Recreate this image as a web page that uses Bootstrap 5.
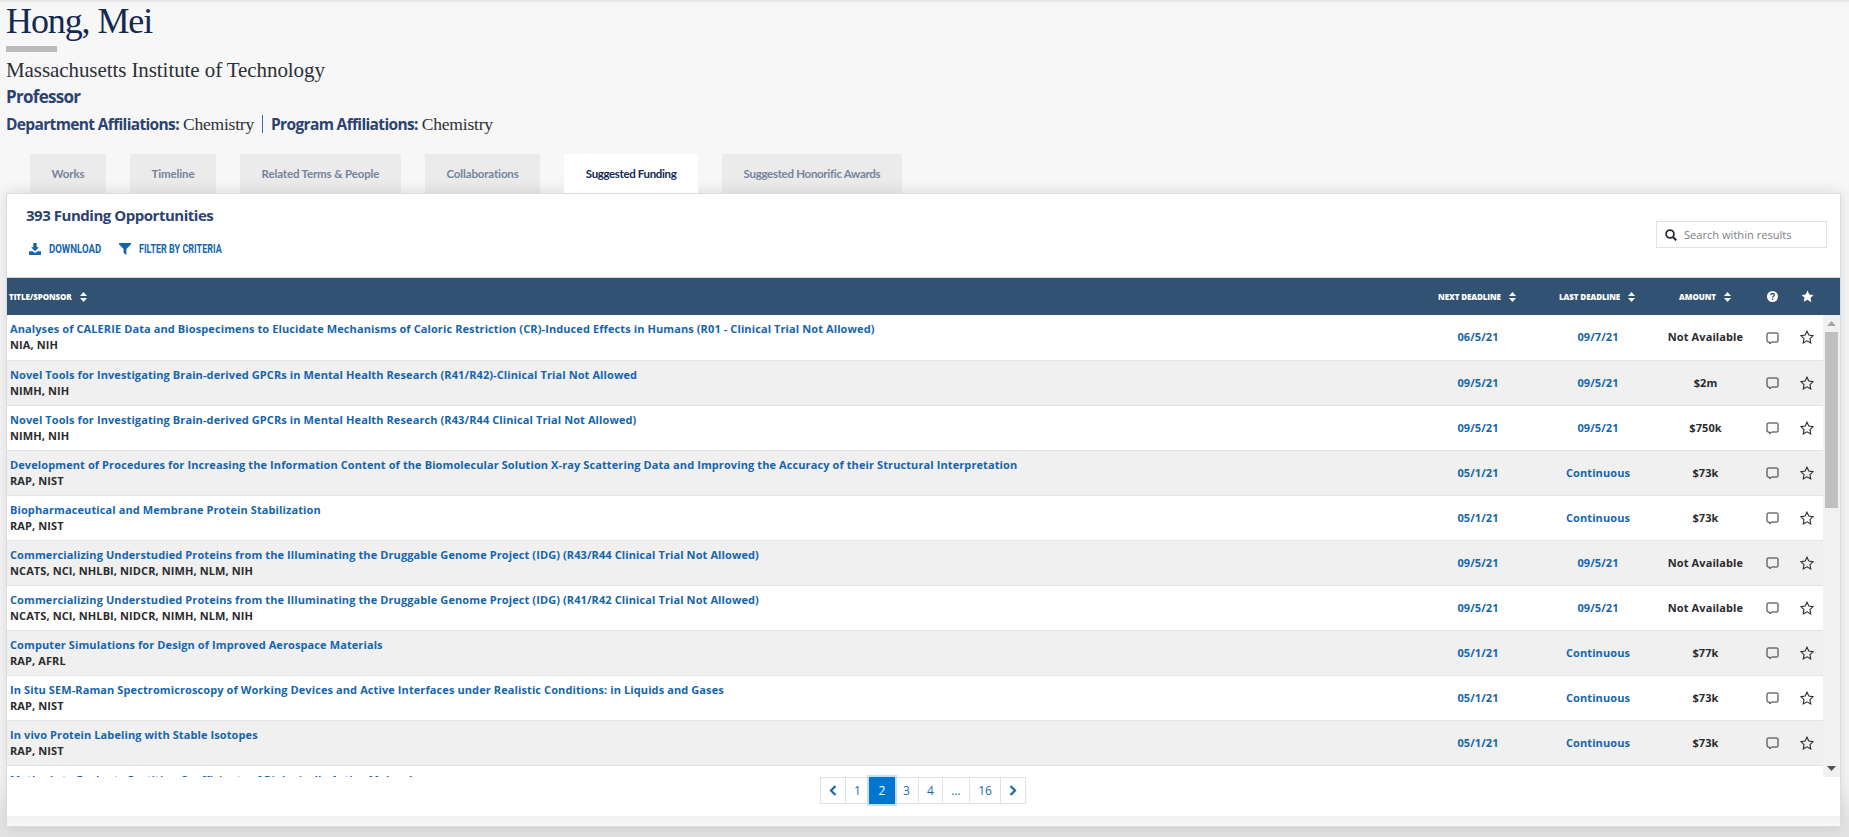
<!DOCTYPE html>
<html lang="en"><head><meta charset="utf-8"><title>Hong, Mei</title>
<link href="https://cdn.jsdelivr.net/npm/bootstrap@5.3.0/dist/css/bootstrap.min.css" rel="stylesheet">
<style>
html,body{height:837px;overflow:hidden}
body{background:#f7f7f7;font-family:"Open Sans",sans-serif}
.page-wrap{padding:0 8px 0 6px;height:837px;background:linear-gradient(#f7f7f7 780px,#e3e3e3 830px);box-shadow:inset 0 3px 3px -2px rgba(0,0,0,.12)}
.hname{font:400 36px/42px "Liberation Serif",serif;letter-spacing:-1.1px;color:#14294f;margin:0}
.hbar{width:51px;height:6px;background:#bbb;margin:4px 0 5px}
.hinst{font:400 21px/26px "Liberation Serif",serif;letter-spacing:-.08px;color:#2b2f36;margin:0}
.hrole{font:700 17px/22px "Open Sans",sans-serif;letter-spacing:-.7px;color:#2c4270;margin:3px 0 0}
.haff{font:700 15.5px/22px "Open Sans",sans-serif;letter-spacing:-.65px;color:#2c4270;margin:5px 0 0;display:flex;align-items:center}
.haff span{font:400 17.5px/22px "Liberation Serif",serif;letter-spacing:-.2px;color:#2b2f36;margin-left:4px}
.haff i{display:block;width:1px;height:18px;background:#2c6fb0;margin:0 8px}
.tabrow{display:flex;gap:24px;padding-left:24px;margin-top:19px;height:39px;position:relative}
.tabx{font:700 11.5px/39px "Lato",sans-serif;color:#75849b;background:#ebebeb;padding:0 21.600px;letter-spacing:-.14px;white-space:nowrap}
.tabx.on{background:#fff;color:#14294f;position:relative;z-index:3;letter-spacing:-.36px}
.tabx.tight{letter-spacing:-.3px}
.panel{position:relative;z-index:2;background:#fff;border:1px solid #dcdcdc;box-shadow:0 0 14px rgba(0,0,0,.13);height:634px;display:flex;flex-direction:column}
.ptop{height:83px;padding:10px 13px 0 19px;display:flex;justify-content:space-between}
.ptitle{font:700 15px/22px "Open Sans",sans-serif;letter-spacing:-.47px;color:#2c4270;margin:0}
.acts{display:flex;margin-top:15px;padding-left:3px}
.acts a{display:flex;align-items:center;gap:8px;text-decoration:none;color:#1565ad;margin-right:18px}
.acts span{display:inline-block;font:700 12px/16px "Roboto",sans-serif;transform:scaleX(.8);transform-origin:left center;white-space:nowrap}
.acts .w1{margin-right:-13px}
.acts span.w2{transform:scaleX(.75);margin-right:-27px}
.sbox{width:171px;height:27px;margin-top:17px;border:1px solid #dfe3e9;display:flex;align-items:center;gap:7px;padding:0 8px}
.sbox input{border:0;outline:0;padding:0;width:130px;font:400 11.100px/16px "Open Sans",sans-serif;color:#333;background:transparent}
.sbox input::placeholder{color:#7b7f85;opacity:1}
.tbl{table-layout:fixed;width:100%;margin:0;border-collapse:collapse}
.tbl>*>*>*{padding:0;background:transparent;box-shadow:none}
.thead-wrap{background:#315272;height:38px;border-top:1px solid #cfd4da}
.thead-wrap th{height:37px;color:#fff;font:800 8px/12px "Open Sans",sans-serif;letter-spacing:-.1px;border:0;vertical-align:middle;text-align:center;white-space:nowrap;text-transform:uppercase}
.thead-wrap th:first-child{text-align:left;padding-left:2px}
.thead-wrap svg{vertical-align:-2px}
.sortic{margin-left:8px}
.tscroll{display:flex;height:462px;overflow:hidden}
.tbody-wrap{flex:1 1 auto;min-width:0;overflow:hidden}
.tbody-wrap tr{height:45px}
.tbody-wrap td{border:0;border-bottom:1px solid #e1e4ea;vertical-align:middle;text-align:center;font:700 11px/16px "Open Sans",sans-serif;letter-spacing:.1px;color:#2a2b2d;height:45px;white-space:nowrap}
.tbody-wrap td:first-child{text-align:left;padding:0 0 0 3px;overflow:hidden}
.tbody-wrap td:first-child.endcell{vertical-align:top;padding-top:6px}
.tbody-wrap td svg{display:block;margin:0 auto}
.tbody-wrap tr:nth-child(even) td{background:#f0f0f0}
.tbody-wrap a{color:#1565ad;text-decoration:none;display:block}
.tbody-wrap a.cen{display:inline}
.sponsor{display:block}
.sbar{flex:0 0 17px;width:17px;background:#f1f1f1;display:flex;flex-direction:column;align-items:center}
.sarrow{height:17px;flex:none;display:flex;align-items:center;justify-content:center}
.sthumb{width:13px;height:176px;background:#c0c0c0;flex:none}
.sgrow{flex:1}
.pfoot{flex:1;display:flex;justify-content:center;align-items:flex-start}
.pgr{display:flex;margin:0;padding:0;list-style:none;font:400 12px/25px "Open Sans",sans-serif}
.pgr li{border:1px solid #dde2e8;margin-left:-1px;height:27px;text-align:center;color:#1a69b0;background:#fff;position:relative}
.pgr li.cur{background:#0275d0;color:#fff;border-color:#0275d0;box-shadow:0 0 0 2px #c5dff4;z-index:1}
.pgr svg{vertical-align:-1px}
.pend{height:10px;flex:none;background:linear-gradient(#f0f0f0,#f8f8f8)}
</style></head><body>
<div class="page-wrap">
<h1 class="hname">Hong, Mei</h1>
<div class="hbar"></div>
<p class="hinst">Massachusetts Institute of Technology</p>
<p class="hrole">Professor</p>
<p class="haff">Department Affiliations:<span>Chemistry</span><i></i>Program Affiliations:<span>Chemistry</span></p>
<div class="tabrow">
<div class="tabx">Works</div><div class="tabx">Timeline</div><div class="tabx">Related Terms &amp; People</div><div class="tabx">Collaborations</div><div class="tabx on">Suggested Funding</div><div class="tabx tight">Suggested Honorific Awards</div>
</div>
<div class="panel">
<div class="ptop">
<div>
<h2 class="ptitle">393 Funding Opportunities</h2>
<div class="acts">
<a href="#"><svg width="12" height="12" viewBox="0 0 12 12" fill="#1565ad"><path d="M4.300 0h3.400v4.300h2.200L6 8.200 2.100 4.300h2.200z"/><path d="M0 8.200h3.600L6 10l2.400-1.800H12V12H0z"/></svg><span class="w1">DOWNLOAD</span></a>
<a href="#"><svg width="12" height="12" viewBox="0 0 12 12" fill="#1565ad"><path d="M0 0h12v1.200L7.400 6v6L4.600 10V6L0 1.200z"/></svg><span class="w2">FILTER BY CRITERIA</span></a>
</div>
</div>
<div class="sbox"><svg width="12" height="12" viewBox="0 0 12 12" fill="none" stroke="#2a2f36" stroke-width="1.800"><circle cx="5" cy="5" r="3.900"/><path d="M8 8l3.300 3.300" stroke-width="2.200"/></svg><input placeholder="Search within results" aria-label="Search within results"></div>
</div>
<div class="thead-wrap">
<table class="table tbl"><colgroup><col><col style="width:120px"><col style="width:120px"><col style="width:96px"><col style="width:38px"><col style="width:32px"><col style="width:17px"></colgroup>
<thead><tr>
<th>Title/Sponsor<svg class="sortic" width="7" height="10" viewBox="0 0 7 10" fill="#fff"><path d="M3.500 0L7 4H0zM0 6h7l-3.500 4z"/></svg></th>
<th>Next Deadline<svg class="sortic" width="7" height="10" viewBox="0 0 7 10" fill="#fff"><path d="M3.500 0L7 4H0zM0 6h7l-3.500 4z"/></svg></th>
<th>Last Deadline<svg class="sortic" width="7" height="10" viewBox="0 0 7 10" fill="#fff"><path d="M3.500 0L7 4H0zM0 6h7l-3.500 4z"/></svg></th>
<th>Amount<svg class="sortic" width="7" height="10" viewBox="0 0 7 10" fill="#fff"><path d="M3.500 0L7 4H0zM0 6h7l-3.500 4z"/></svg></th>
<th><svg width="11" height="11" viewBox="0 0 11 11"><circle cx="5.500" cy="5.500" r="5.500" fill="#fff"/><path d="M3.700 4.200C3.800 3 4.600 2.500 5.600 2.500c1 0 1.800.6 1.800 1.500 0 1.300-1.800 1.300-1.800 2.600" fill="none" stroke="#315272" stroke-width="1.300"/><rect x="4.900" y="7.400" width="1.400" height="1.400" fill="#315272"/></svg></th>
<th><svg width="13" height="13" viewBox="0 0 24 24" fill="#fff"><path d="M12 1l3.400 7.300 7.900 1-5.800 5.500 1.500 7.900L12 17.800 5 21.700l1.500-7.900L.7 9.300l7.900-1z"/></svg></th>
<th></th></tr></thead></table>
</div>
<div class="tscroll">
<div class="tbody-wrap">
<table class="table tbl"><colgroup><col><col style="width:120px"><col style="width:120px"><col style="width:95px"><col style="width:38px"><col style="width:32px"></colgroup>
<tbody id="rows"></tbody></table>
</div>
<div class="sbar">
<div class="sarrow"><svg width="9" height="5" viewBox="0 0 9 5" fill="#a6a6a6"><path d="M4.500 0L9 5H0z"/></svg></div>
<div class="sthumb"></div><div class="sgrow"></div>
<div class="sarrow"><svg width="9" height="5" viewBox="0 0 9 5" fill="#505050"><path d="M0 0h9L4.500 5z"/></svg></div>
</div>
</div>
<div class="pfoot">
<ul class="pgr">
<li style="width:26px"><svg width="8" height="11" viewBox="0 0 8 11" fill="none" stroke="#1a69b0" stroke-width="2.200"><path d="M6.500 1L2 5.500 6.500 10"/></svg></li>
<li style="width:25px">1</li><li class="cur" style="width:26px">2</li><li style="width:25px">3</li><li style="width:25px">4</li><li style="width:28px">...</li><li style="width:32px">16</li>
<li style="width:26px"><svg width="8" height="11" viewBox="0 0 8 11" fill="none" stroke="#1a69b0" stroke-width="2.200"><path d="M1.500 1L6 5.500 1.500 10"/></svg></li>
</ul>
</div>
<div class="pend"></div>
</div>
</div>
<script>
const data=[
["Analyses of CALERIE Data and Biospecimens to Elucidate Mechanisms of Caloric Restriction (CR)-Induced Effects in Humans (R01 - Clinical Trial Not Allowed)","NIA, NIH","06/5/21","09/7/21","Not Available"],
["Novel Tools for Investigating Brain-derived GPCRs in Mental Health Research (R41/R42)-Clinical Trial Not Allowed","NIMH, NIH","09/5/21","09/5/21","$2m"],
["Novel Tools for Investigating Brain-derived GPCRs in Mental Health Research (R43/R44 Clinical Trial Not Allowed)","NIMH, NIH","09/5/21","09/5/21","$750k"],
["Development of Procedures for Increasing the Information Content of the Biomolecular Solution X-ray Scattering Data and Improving the Accuracy of their Structural Interpretation","RAP, NIST","05/1/21","Continuous","$73k"],
["Biopharmaceutical and Membrane Protein Stabilization","RAP, NIST","05/1/21","Continuous","$73k"],
["Commercializing Understudied Proteins from the Illuminating the Druggable Genome Project (IDG) (R43/R44 Clinical Trial Not Allowed)","NCATS, NCI, NHLBI, NIDCR, NIMH, NLM, NIH","09/5/21","09/5/21","Not Available"],
["Commercializing Understudied Proteins from the Illuminating the Druggable Genome Project (IDG) (R41/R42 Clinical Trial Not Allowed)","NCATS, NCI, NHLBI, NIDCR, NIMH, NLM, NIH","09/5/21","09/5/21","Not Available"],
["Computer Simulations for Design of Improved Aerospace Materials","RAP, AFRL","05/1/21","Continuous","$77k"],
["In Situ SEM-Raman Spectromicroscopy of Working Devices and Active Interfaces under Realistic Conditions: in Liquids and Gases","RAP, NIST","05/1/21","Continuous","$73k"],
["In vivo Protein Labeling with Stable Isotopes","RAP, NIST","05/1/21","Continuous","$73k"]];
const cm='<svg width="13" height="13" viewBox="0 -1 13 13" fill="none" stroke="#2a2f36" stroke-width="1"><path d="M2 1h9a1 1 0 0 1 1 1v7a1 1 0 0 1-1 1H5.500L4 11.800 3.500 10H2a1 1 0 0 1-1-1V2a1 1 0 0 1 1-1z"/></svg>';
const st='<svg width="14" height="14" viewBox="0 0 24 24" fill="none" stroke="#2a2f36" stroke-width="1.900"><path d="M12 2l3.100 6.700 7.300 1-5.300 5.100 1.300 7.300L12 18.500 5.600 22.100l1.300-7.300L1.600 9.700l7.300-1z"/></svg>';
document.getElementById('rows').innerHTML=data.map(r=>`<tr><td><a href="#">${r[0]}</a><span class="sponsor">${r[1]}</span></td><td><a class="cen" href="#">${r[2]}</a></td><td><a class="cen" href="#">${r[3]}</a></td><td>${r[4]}</td><td>${cm}</td><td>${st}</td></tr>`).join('')+'<tr><td class="endcell"><a href="#">Methods to Evaluate Partition Coefficients of Biologically Active Molecules</a></td><td></td><td></td><td></td><td></td><td></td></tr>';
</script>
<script src="https://cdn.jsdelivr.net/npm/bootstrap@5.3.0/dist/js/bootstrap.bundle.min.js"></script>
</body></html>
